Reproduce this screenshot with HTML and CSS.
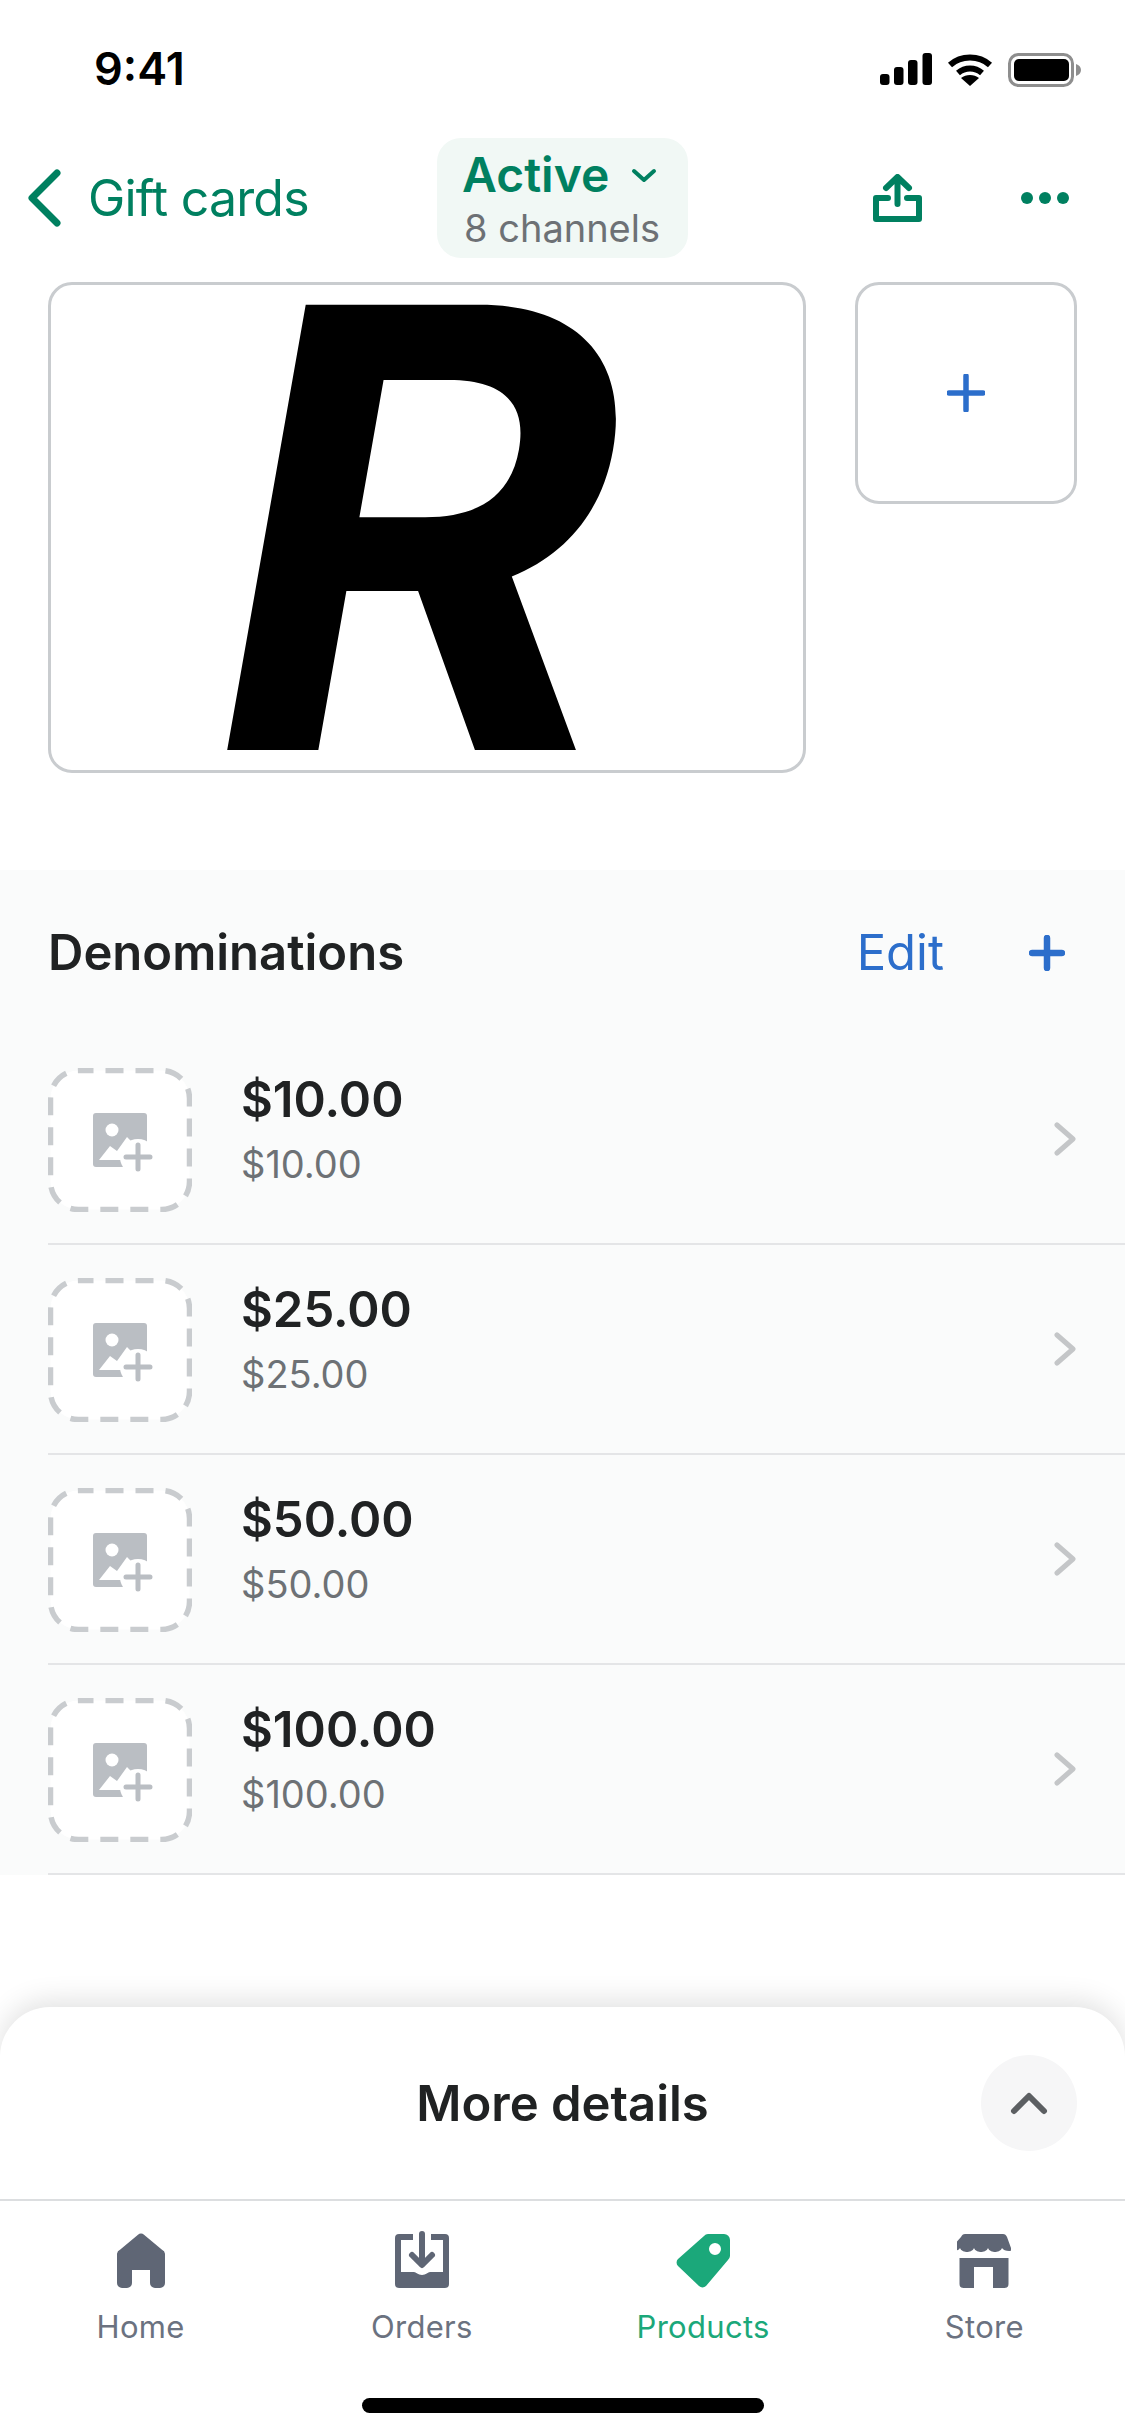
FILE: index.html
```html
<!DOCTYPE html>
<html lang="en">
<head>
  <meta charset="UTF-8">
  <meta name="viewport" content="width=device-width, initial-scale=1.0">
  <title>Gift cards</title>
  <link rel="stylesheet" href="styles.css">
</head>
<body>
  <svg class="defs" width="0" height="0">
    <symbol id="add-image" viewBox="0 0 144 144">
      <rect x="2.500" y="2.500" width="139" height="139" rx="28" fill="#fff" stroke="#c9cccf" stroke-width="5.500" stroke-dasharray="18 12" stroke-dashoffset="3"/>
      <g transform="translate(45 45)">
        <rect width="54" height="54" rx="3" fill="#babec3"/>
        <circle cx="19" cy="17" r="6.500" fill="#fff"/>
        <path d="M6 47 17 33l7 5 10-14 6 6v17z" fill="#fff"/>
        <circle cx="45" cy="44" r="18" fill="#fff"/>
        <path d="M45 32v24M33 44h24" stroke="#babec3" stroke-width="5" stroke-linecap="round"/>
      </g>
    </symbol>
    <symbol id="chevron" viewBox="0 0 22 34">
      <path d="M3 3l16 14L3 31" fill="none" stroke="#c4c6c8" stroke-width="5" stroke-linecap="round" stroke-linejoin="round"/>
    </symbol>
  </svg>

  <div class="screen">
    <div class="status-bar">
      <span class="time">9:41</span>
      <div class="status-icons">
        <svg width="52" height="32" viewBox="0 0 52 32"><rect y="21" width="9.500" height="11" rx="3"/><rect x="14" y="14" width="9.500" height="18" rx="3"/><rect x="28" y="7" width="9.500" height="25" rx="3"/><rect x="42.500" width="9.500" height="32" rx="3"/></svg>
        <svg width="46" height="33" viewBox="0 0 46 33"><path d="M3 12C14 2 32 2 43 12M11 20c7-6 17-6 24 0" fill="none" stroke="#000" stroke-width="6"/><path d="M23 33l-9-8c5-4 13-4 18 0z"/></svg>
        <svg width="74" height="34" viewBox="0 0 74 34"><rect x="1.500" y="1.500" width="63" height="31" rx="9" fill="none" stroke="#8e8e8e" stroke-width="3"/><rect x="6" y="6" width="55" height="22" rx="5"/><path d="M68 11c3 1 5 3 5 6s-2 5-5 6z" fill="#8e8e8e"/></svg>
      </div>
    </div>

    <div class="nav-bar">
      <a class="back-link">
        <svg width="36" height="58" viewBox="0 0 36 58"><path d="M31 4 6 29l25 25" fill="none" stroke="#008060" stroke-width="7" stroke-linecap="round" stroke-linejoin="round"/></svg>
        <span>Gift cards</span>
      </a>
      <div class="status-pill">
        <div class="status-title">
          <span>Active</span>
          <svg width="26" height="15" viewBox="0 0 26 15"><path d="M3 3l10 9 10-9" fill="none" stroke="#008060" stroke-width="4" stroke-linecap="round" stroke-linejoin="round"/></svg>
        </div>
        <div class="status-sub">8 channels</div>
      </div>
      <div class="nav-actions">
        <svg width="49" height="48" viewBox="0 0 49 48"><path d="M15 24H3v21h43V24H34" fill="none" stroke="#008060" stroke-width="6" stroke-linejoin="round" stroke-linecap="round"/><path d="M24.500 30V4M13 14 24.500 3 36 14" fill="none" stroke="#008060" stroke-width="6" stroke-linecap="round" stroke-linejoin="round"/></svg>
        <svg width="48" height="12" viewBox="0 0 48 12"><circle cx="6" cy="6" r="6" fill="#008060"/><circle cx="24" cy="6" r="6" fill="#008060"/><circle cx="42" cy="6" r="6" fill="#008060"/></svg>
      </div>
    </div>

    <div class="gallery">
      <div class="gallery-main"><span class="logo-letter">R</span></div>
      <div class="gallery-add">
        <svg width="38" height="38" viewBox="0 0 38 38"><path d="M19 2v34M2 19h34" stroke="#2c6ecb" stroke-width="5.500" stroke-linecap="round"/></svg>
      </div>
    </div>

    <section class="denominations">
      <div class="section-head">
        <h2>Denominations</h2>
        <span class="edit-link">Edit</span>
        <svg width="36" height="36" viewBox="0 0 36 36"><path d="M18 3v30M3 18h30" stroke="#2c6ecb" stroke-width="6.500" stroke-linecap="round"/></svg>
      </div>

      <div class="row">
        <svg class="thumb" width="144" height="144"><use href="#add-image"/></svg>
        <div class="row-text">
          <div class="row-title">$10.00</div>
          <div class="row-sub">$10.00</div>
        </div>
        <svg class="row-chevron" width="22" height="34"><use href="#chevron"/></svg>
      </div>
      <div class="row">
        <svg class="thumb" width="144" height="144"><use href="#add-image"/></svg>
        <div class="row-text">
          <div class="row-title">$25.00</div>
          <div class="row-sub">$25.00</div>
        </div>
        <svg class="row-chevron" width="22" height="34"><use href="#chevron"/></svg>
      </div>
      <div class="row">
        <svg class="thumb" width="144" height="144"><use href="#add-image"/></svg>
        <div class="row-text">
          <div class="row-title">$50.00</div>
          <div class="row-sub">$50.00</div>
        </div>
        <svg class="row-chevron" width="22" height="34"><use href="#chevron"/></svg>
      </div>
      <div class="row">
        <svg class="thumb" width="144" height="144"><use href="#add-image"/></svg>
        <div class="row-text">
          <div class="row-title">$100.00</div>
          <div class="row-sub">$100.00</div>
        </div>
        <svg class="row-chevron" width="22" height="34"><use href="#chevron"/></svg>
      </div>
    </section>

    <div class="sheet">
      <div class="sheet-head">
        <span class="sheet-title">More details</span>
        <div class="sheet-toggle">
          <svg width="38" height="24" viewBox="0 0 38 24"><path d="M4 20 19 5l15 15" fill="none" stroke="#5c5f62" stroke-width="6" stroke-linecap="round" stroke-linejoin="round"/></svg>
        </div>
      </div>

      <nav class="tab-bar">
        <div class="tab">
          <svg width="54" height="57" viewBox="0 0 54 57"><path d="M24 3.800a4 4 0 0 1 6 0l18 15a5 5 0 0 1 3 4V52a5 5 0 0 1-5 5H41a5 5 0 0 1-5-5V39H18v13a5 5 0 0 1-5 5H8a5 5 0 0 1-5-5V22.800a5 5 0 0 1 3-4z" fill="#5f6675"/></svg>
          <span>Home</span>
        </div>
        <div class="tab">
          <svg width="54" height="57" viewBox="0 0 54 57"><path d="M4 3h14v6H6v32h13c2 0 4 3 8 3s6-3 8-3h13V9H36V3h14a4 4 0 0 1 4 4v46a4 4 0 0 1-4 4H4a4 4 0 0 1-4-4V7a4 4 0 0 1 4-4z" fill="#5f6675"/><path d="M27 3v29M17 24l10 10 10-10" fill="none" stroke="#5f6675" stroke-width="6" stroke-linecap="round" stroke-linejoin="round"/></svg>
          <span>Orders</span>
        </div>
        <div class="tab tab-active">
          <svg width="54" height="57" viewBox="0 0 54 57"><path fill-rule="evenodd" d="M32 3h16a6 6 0 0 1 6 6v16a6 6 0 0 1-2 4L30 55a5 5 0 0 1-7 0L2 35a5 5 0 0 1 0-7L28 5a6 6 0 0 1 4-2zm7 9a6 6 0 1 0 0 12 6 6 0 0 0 0-12z" fill="#1ba87a"/></svg>
          <span>Products</span>
        </div>
        <div class="tab">
          <svg width="54" height="57" viewBox="0 0 54 57"><path d="M8 3h38c2 0 3 1 4 3l4 11c1 2 0 3-2 3-3 0-6-1-7-3-1 3-5 4-7 4s-6-1-7-4c-1 3-5 4-7 4s-6-1-7-4c-1 3-5 4-7 4s-6-1-7-4c-1 2-4 3-7 3-2 0-3-1-2-3L4 6c1-2 2-3 4-3z" fill="#5f6675"/><path d="M2.500 27h49v26a4 4 0 0 1-4 4H36V36H17v21H6.500a4 4 0 0 1-4-4z" fill="#5f6675"/></svg>
          <span>Store</span>
        </div>
      </nav>

      <div class="home-bar"><div class="home-indicator"></div></div>
    </div>
  </div>
</body>
</html>
```

FILE: styles.css
```css
* {
  box-sizing: border-box;
}

body {
  margin: 0;
  background: #fff;
  font-family: 'Inter', 'Roboto', sans-serif;
  color: #202223;
}

.defs {
  display: block;
  height: 0;
}

.screen {
  width: 1125px;
  height: 2436px;
  display: flex;
  flex-direction: column;
  overflow: hidden;
  background: #fff;
}

/* status bar */
.status-bar {
  height: 138px;
  flex: none;
  display: flex;
  justify-content: space-between;
  align-items: flex-start;
  padding: 53px 43px 0 94px;
}

.time {
  font-size: 45px;
  font-weight: 600;
  line-height: 32px;
  color: #000;
}

.status-icons {
  display: flex;
  align-items: flex-start;
  gap: 15px;
}

/* nav bar */
.nav-bar {
  height: 120px;
  flex: none;
  position: relative;
  display: flex;
  justify-content: space-between;
  align-items: center;
  padding: 0 56px 0 26px;
}

.back-link {
  display: flex;
  align-items: center;
  gap: 26px;
  color: #008060;
  font-size: 50px;
  letter-spacing: -0.8px;
}

.status-pill {
  position: absolute;
  left: 437px;
  top: 0;
  width: 251px;
  height: 120px;
  padding: 9px 0 0 25px;
  background: #f1f8f5;
  border-radius: 24px;
}

.status-title {
  display: flex;
  align-items: center;
  gap: 22px;
  color: #008060;
  font-size: 48px;
  font-weight: 600;
  line-height: 56px;
}

.status-sub {
  margin: 3px 0 0 2px;
  color: #6d7175;
  font-size: 38px;
  line-height: 44px;
}

.nav-actions {
  display: flex;
  align-items: center;
  gap: 99px;
}

/* gallery */
.gallery {
  flex: none;
  display: flex;
  align-items: flex-start;
  gap: 49px;
  margin-top: 24px;
  padding: 0 48px;
}

.gallery-main {
  width: 758px;
  height: 491px;
  display: flex;
  justify-content: center;
  align-items: center;
  border: 3px solid #c9cccf;
  border-radius: 24px;
}

.logo-letter {
  font-size: 612px;
  font-weight: 700;
  line-height: 480px;
  color: #000;
  transform: skewX(-10deg);
}

.gallery-add {
  width: 222px;
  height: 222px;
  display: flex;
  justify-content: center;
  align-items: center;
  border: 3px solid #c9cccf;
  border-radius: 24px;
}

/* denominations */
.denominations {
  flex: none;
  margin-top: 97px;
  padding-left: 48px;
  background: #fafbfb;
}

.section-head {
  height: 165px;
  display: flex;
  align-items: center;
  padding-right: 60px;
}

.section-head h2 {
  flex: 1;
  margin: 0;
  font-size: 49px;
  font-weight: 600;
}

.edit-link {
  margin-right: 85px;
  color: #2c6ecb;
  font-size: 49px;
}

.row {
  height: 210px;
  display: flex;
  align-items: center;
  padding-right: 49px;
  border-bottom: 2px solid #e4e5e7;
}

.thumb {
  flex: none;
  margin: 2px 49px 0 0;
}

.row-text {
  flex: 1;
  padding-bottom: 20px;
}

.row-title {
  font-size: 49px;
  font-weight: 600;
  line-height: 58px;
}

.row-sub {
  margin-top: 12px;
  color: #6d7175;
  font-size: 38px;
  line-height: 46px;
}

/* bottom sheet */
.sheet {
  flex: 1;
  margin-top: 132px;
  background: #fff;
  border-radius: 50px 50px 0 0;
  box-shadow: 0 -6px 28px rgba(0, 0, 0, 0.12);
}

.sheet-head {
  height: 194px;
  display: flex;
  justify-content: center;
  align-items: center;
  position: relative;
  border-bottom: 2px solid #dcdee0;
}

.sheet-title {
  font-size: 49px;
  font-weight: 600;
}

.sheet-toggle {
  position: absolute;
  right: 48px;
  top: 48px;
  width: 96px;
  height: 96px;
  display: flex;
  justify-content: center;
  align-items: center;
  border-radius: 50%;
  background: #f6f6f7;
}

.tab-bar {
  display: grid;
  grid-template-columns: repeat(4, 1fr);
  padding-top: 30px;
}

.tab {
  display: flex;
  flex-direction: column;
  align-items: center;
  gap: 21px;
  color: #6b7280;
  font-size: 31px;
  line-height: 36px;
  letter-spacing: 0.3px;
}

.tab-active {
  color: #1ba87a;
}

.home-bar {
  display: flex;
  justify-content: center;
  margin-top: 53px;
}

.home-indicator {
  width: 402px;
  height: 15px;
  border-radius: 8px;
  background: #000;
}
```
